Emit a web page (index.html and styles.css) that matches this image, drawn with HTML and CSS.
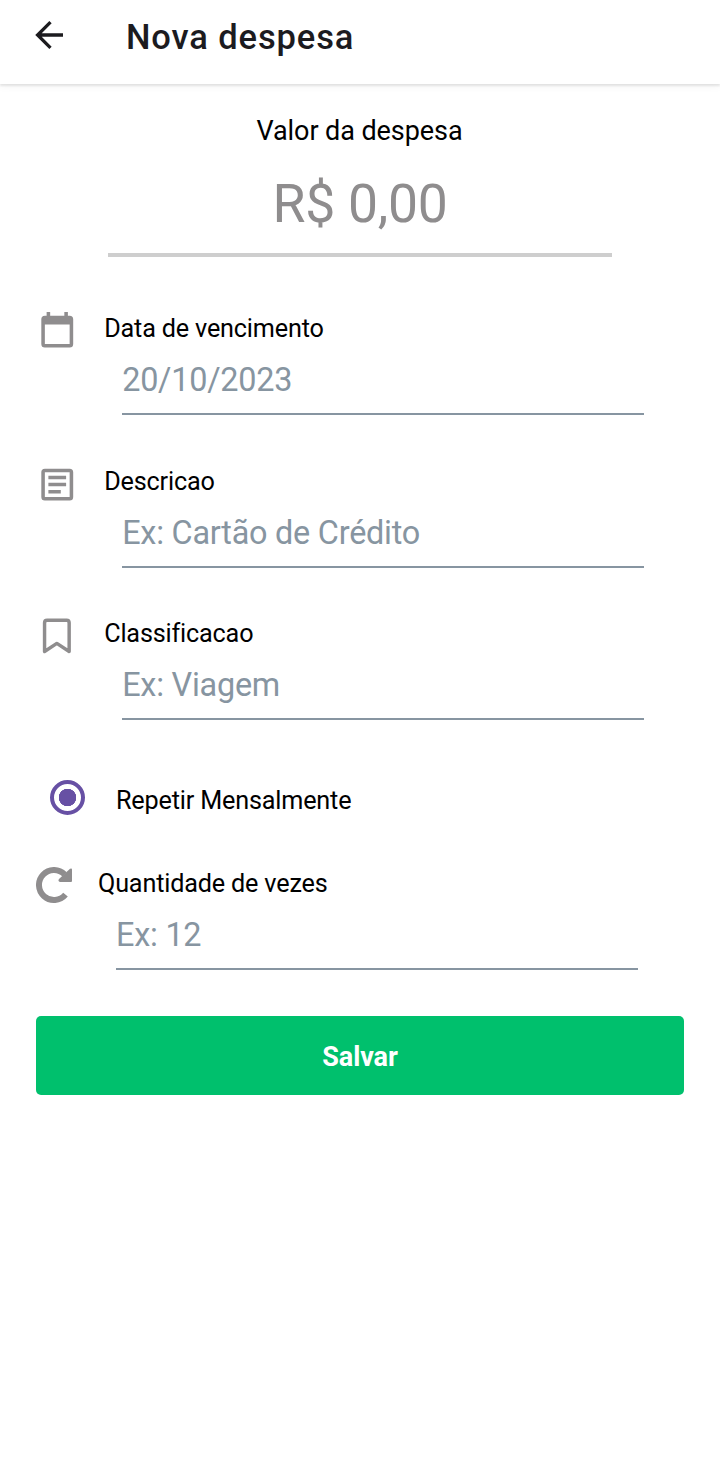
FILE: index.html
```html
<!DOCTYPE html>
<html lang="pt-BR">
<head>
<meta charset="utf-8">
<title>Nova despesa</title>
<link rel="stylesheet" href="styles.css">
</head>
<body>
<header class="bar">
  <svg class="back" viewBox="0 0 28 28"><path d="M28 14H3M15.500 1.200 2.600 14l12.900 12.800" fill="none" stroke="#1c1b1f" stroke-width="3.300"/></svg>
  <h1 class="title">Nova despesa</h1>
</header>
<main class="content">
  <section class="amount">
    <div class="amount-label">Valor da despesa</div>
    <div class="amount-value">R$ 0,00</div>
  </section>
  <section class="row">
    <svg class="icon" viewBox="0 0 24 24"><path d="M19 19H5V8h14M16 1v2H8V1H6v2H5a2 2 0 0 0-2 2v14a2 2 0 0 0 2 2h14a2 2 0 0 0 2-2V5a2 2 0 0 0-2-2h-1V1"/></svg>
    <div class="field"><div class="label">Data de vencimento</div><div class="input">20/10/2023</div></div>
  </section>
  <section class="row">
    <svg class="icon" viewBox="0 0 24 24"><path fill-rule="evenodd" d="M5 3h14a2 2 0 0 1 2 2v14a2 2 0 0 1-2 2H5a2 2 0 0 1-2-2V5a2 2 0 0 1 2-2zm0 2v14h14V5zm2 2h10v2H7zm0 4h10v2H7zm0 4h7v2H7z"/></svg>
    <div class="field"><div class="label">Descricao</div><div class="input">Ex: Cartão de Crédito</div></div>
  </section>
  <section class="row">
    <svg class="icon" viewBox="0 0 43.2 43.2"><path d="M8.700 36.800V7.500Q8.700 4.900 11.300 4.900H31.100Q33.700 4.900 33.700 7.500V36.800L21.200 28.500Z" fill="none" stroke="#8f8d8e" stroke-width="3.500" stroke-linejoin="round"/></svg>
    <div class="field"><div class="label">Classificacao</div><div class="input">Ex: Viagem</div></div>
  </section>
  <section class="repeat"><span class="radio"></span><span class="label">Repetir Mensalmente</span></section>
  <section class="row times">
    <svg class="turn" viewBox="0 0 36 36"><path d="M29.500 27.600A15 15 0 1 1 28.600 7.400" fill="none" stroke="#8f8d8e" stroke-width="6"/><path d="M36 2.500V14q0 1-1 1H24q-2.500-1-1-3L34 1.800q2-.8 2 .7z"/></svg>
    <div class="field"><div class="label">Quantidade de vezes</div><div class="input">Ex: 12</div></div>
  </section>
  <button class="save">Salvar</button>
</main>
</body>
</html>
```
FILE: styles.css
```css
* { box-sizing: border-box; }
body { margin: 0; min-height: 1471px; background: #fff; font-family: Roboto, sans-serif; color: #000; }
.bar { display: flex; height: 84px; padding: 15px 35px 0; box-shadow: 0 2px 2px rgba(0,0,0,.09), 0 3px 8px rgba(0,0,0,.04); }
.back { width: 28px; height: 28px; margin: 6px 63px 0 0; }
.title { margin: 1px 0 0; font-size: 34.5px; line-height: 42px; font-weight: 500; letter-spacing: .88px; color: #1c1b1f; }
.content { padding: 31px 36px 0; }
.amount { width: 504px; height: 142px; margin: 0 auto; border-bottom: 4px solid #cecece; text-align: center; }
.amount-label { padding-right: 1px; font-size: 27px; line-height: 32px; letter-spacing: -.08px; }
.amount-value { margin-top: 25px; font-size: 53.5px; line-height: 64px; letter-spacing: -.3px; color: #8f8d8e; }
.row { display: flex; height: 152.5px; }
.amount + .row { margin-top: 55px; }
.icon { width: 42.5px; height: 43.2px; margin: -2px 25.7px 0 0; fill: #8f8d8e; flex: none; }
.field { width: 540px; padding-top: 2px; }
.label { font-size: 25.2px; line-height: 30px; letter-spacing: -.17px; }
.input { height: 55px; margin: 16px 0 0 18px; padding-top: 1px; border-bottom: 2px solid #8795a1; font-size: 32.4px; line-height: 38px; letter-spacing: -.24px; color: #8795a1; }
.repeat { display: flex; height: 97px; padding: 10px 0 0 14px; }
.radio { width: 35px; height: 35px; margin-right: 31px; border: 4px solid #6750a4; border-radius: 50%; background: radial-gradient(circle, #6750a4 8.5px, transparent 9px); }
.repeat .label { margin-top: 6px; }
.times { height: 149px; }
.turn { width: 36px; height: 36px; margin: 0 26px 0 0; fill: #8f8d8e; }
.save { display: block; width: 648px; height: 79px; padding: 4px 0 0; border: 0; border-radius: 5px; background: #00c06d; color: #fff; font: 700 27px Roboto, sans-serif; letter-spacing: -.1px; }
```
